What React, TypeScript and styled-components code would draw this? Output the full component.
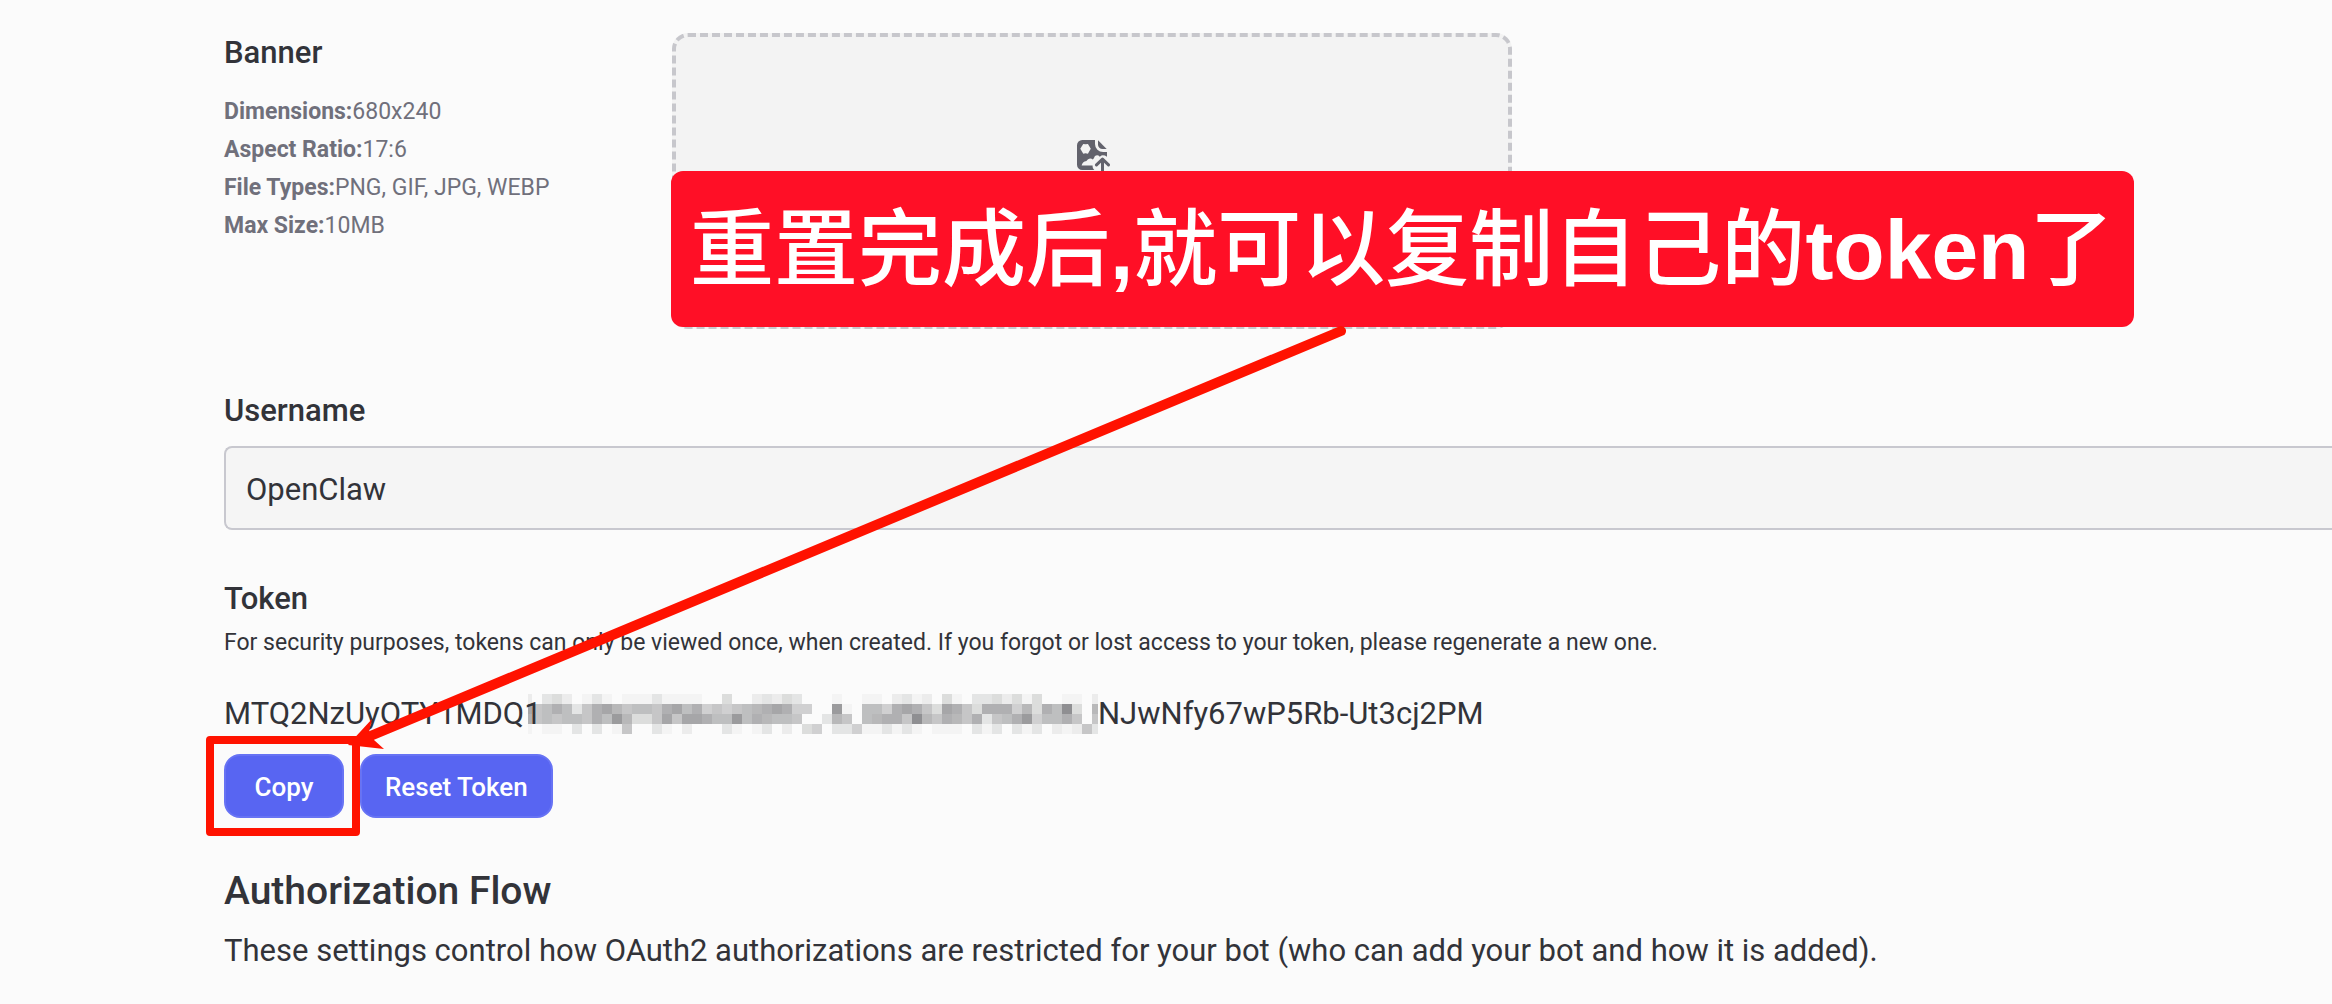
import React from "react";
import styled, { createGlobalStyle } from "styled-components";

const GlobalStyle = createGlobalStyle`
  *, *::before, *::after { box-sizing: border-box; }
  body {
    margin: 0;
    background: #fbfbfb;
    color: #323339;
    font-family: Roboto, "Noto Sans CJK SC", sans-serif;
    overflow-x: hidden;
  }
`;

const Page = styled.main`
  position: relative;
  display: flex;
  flex-direction: column;
  padding: 33px 0 32px 224px;
  overflow: hidden;
`;

const BannerRow = styled.section`
  display: grid;
  grid-template-columns: 448px 840px;
  align-items: start;
`;

const Heading = styled.h2`
  margin: 0;
  font-size: 31px;
  line-height: 40px;
  font-weight: 500;
`;

const SpecList = styled.ul`
  margin: 20px 0 0;
  padding: 0;
  list-style: none;
  color: #70707b;
  font-size: 23px;
  line-height: 38px;

  strong { font-weight: 700; }
`;

const DropArea = styled.div`
  position: relative;
`;

const DropZone = styled.button`
  display: flex;
  align-items: flex-start;
  justify-content: center;
  width: 100%;
  height: 296px;
  padding: 100px 0 0;
  border: 4px dashed #c7c7cc;
  border-radius: 16px;
  background: #f3f3f3;
  color: #62626c;
  cursor: pointer;
`;

const Callout = styled.div`
  position: absolute;
  z-index: 1;
  top: 138px;
  left: -1px;
  height: 156px;
  padding: 0 21px 0 19px;
  border-radius: 12px;
  background: #ff0f26;
  color: #fff;
  font-family: "Liberation Sans", "Noto Sans CJK SC", sans-serif;
  font-size: 84px;
  line-height: 144px;
  font-weight: 700;
  white-space: nowrap;
`;

const Han = styled.span`
  font-family: "Noto Sans CJK SC", sans-serif;
  font-weight: 500;
`;

const Field = styled.section`
  display: flex;
  flex-direction: column;
  margin-top: 62px;
`;

const FieldLabel = styled(Heading).attrs({ as: "label" })<{ htmlFor?: string }>``;

const TextInput = styled.input`
  width: 100%;
  height: 84px;
  margin-top: 15px;
  padding: 2px 20px 0;
  border: 2px solid #c8c8cf;
  border-right: 0;
  border-radius: 8px 0 0 8px;
  background: #f5f5f5;
  color: inherit;
  font: 400 31px/40px Roboto, sans-serif;
  outline: none;
`;

const TokenSection = styled.section`
  display: flex;
  flex-direction: column;
  margin-top: 49px;
`;

const Hint = styled.p`
  margin: 8px 0 0;
  font-size: 23px;
  line-height: 32px;
`;

const TokenValue = styled.div`
  display: flex;
  margin-top: 35px;
  font-size: 31px;
  line-height: 40px;
`;

const TokenStart = styled.span`
  position: relative;
  z-index: 1;
  width: 304px;
`;

const Buttons = styled.div`
  display: flex;
  gap: 16px;
  margin-top: 20px;
`;

const Marked = styled.div`
  position: relative;
  display: flex;

  &::after {
    content: "";
    position: absolute;
    inset: -18px -16px -18px -18px;
    border: 8px solid #ff1200;
    border-radius: 4px;
    pointer-events: none;
  }
`;

const Button = styled.button`
  min-width: 120px;
  height: 64px;
  padding: 2px 23px 0;
  border: 2px solid #6773f4;
  border-radius: 16px;
  background: #5865f2;
  color: #fff;
  font: 500 26px/40px Roboto, sans-serif;
  cursor: pointer;
`;

const FlowSection = styled.section`
  margin-top: 49px;
`;

const Title = styled.h1`
  margin: 0;
  font-size: 39px;
  line-height: 48px;
  font-weight: 500;
`;

const Lead = styled.p`
  margin: 16px 0 0;
  font-size: 31px;
  line-height: 40px;
`;

const Arrow = styled.svg`
  position: absolute;
  z-index: 2;
  top: 320px;
  left: 340px;
  pointer-events: none;
`;

const SHADES: Record<string, string> = {
  "1": "#f4f4f4", "2": "#ececec", "3": "#e4e5e5", "4": "#dcdddc", "5": "#d0d0d1",
  "6": "#c6c6c7", "7": "#bebfc0", "8": "#b8b8b9", "9": "#b0b0b2", A: "#a6a6a8",
  B: "#9b9b9d", C: "#8f8f92",
};

const MOSAIC = [
  "2" + "0342013101113111100400232430" + "0010011023120410334241400110" + "2",
  "A" + "6797369A867769A795656789A955" + "00B107759A964A96499958497C40" + "8",
  "9" + "67677697B8446A6AA977B7987760" + "0386078996C8698693679B577960" + "6",
  "1" + "0110303016003102000310130204" + "5033511313101110313031302126" + "3",
];

function Mosaic() {
  return (
    <svg width="570" height="40" shapeRendering="crispEdges" aria-hidden="true">
      {MOSAIC.flatMap((row, y) =>
        row.split("").map((shade, i) => {
          if (shade === "0") return null;
          const x = i === 0 ? 0 : 4 + (i - 1) * 10;
          const w = i === 0 ? 4 : 10;
          return <rect key={`${x}-${y}`} x={x} y={y * 10} width={w} height="10" fill={SHADES[shade]} />;
        })
      )}
    </svg>
  );
}

function UploadIcon() {
  return (
    <svg width="36" height="36" viewBox="0 0 24 24" fill="currentColor" aria-hidden="true">
      <path
        fillRule="evenodd"
        d="M5.5 2H14v2.6A5.4 5.4 0 0 0 19.400 10H22v3.200A5 5 0 0 0 18.300 12.300L17.200 13.100A2.600 2.600 0 0 0 14 12.600C13.600 13.300 13.300 14.300 12.500 15A2.300 2.300 0 0 0 9 15.200L8.300 16C6.500 16.300 5.300 17.500 5.100 19H12.400C12.300 20.200 12.700 21.300 13.600 22H5.500A3.500 3.500 0 0 1 2 18.500v-13A3.500 3.500 0 0 1 5.500 2ZM6.200 4.600 5.300 6 4.200 7.800 5.300 9.700 6.200 11.100 7.700 10.900 9.300 11.100 10.100 9.700 11.200 7.800 10.100 6 9.300 4.600 7.700 4.900Z"
      />
      <path d="M16 2.200 21.800 8H19a3 3 0 0 1-3-3V2.200Z" />
      <path
        d="M19 23.500v-8M15 18.600l4-3.800 4 3.800"
        fill="none"
        stroke="currentColor"
        strokeWidth="2"
        strokeLinecap="round"
        strokeLinejoin="round"
      />
    </svg>
  );
}

const SPECS: [string, string][] = [
  ["Dimensions:", "680x240"],
  ["Aspect Ratio:", "17:6"],
  ["File Types:", "PNG, GIF, JPG, WEBP"],
  ["Max Size:", "10MB"],
];

export default function App() {
  return (
    <>
      <GlobalStyle />
      <Page>
        <BannerRow>
          <div>
            <Heading>Banner</Heading>
            <SpecList>
              {SPECS.map(([name, value]) => (
                <li key={name}>
                  <strong>{name}</strong>
                  {value}
                </li>
              ))}
            </SpecList>
          </div>
          <DropArea>
            <DropZone type="button" aria-label="Upload banner">
              <UploadIcon />
            </DropZone>
            <Callout>
              <Han>重置完成后</Han>,<Han>就可以复制自己的</Han>token<Han>了</Han>
            </Callout>
          </DropArea>
        </BannerRow>

        <Field>
          <FieldLabel htmlFor="username">Username</FieldLabel>
          <TextInput id="username" type="text" defaultValue="OpenClaw" />
        </Field>

        <TokenSection>
          <Heading>Token</Heading>
          <Hint>
            For security purposes, tokens can only be viewed once, when created. If you forgot or lost access to your
            token, please regenerate a new one.
          </Hint>
          <TokenValue>
            <TokenStart>MTQ2NzUyOTY1MDQ1</TokenStart>
            <Mosaic />
            <span>NJwNfy67wP5Rb-Ut3cj2PM</span>
          </TokenValue>
          <Buttons>
            <Marked>
              <Button type="button">Copy</Button>
            </Marked>
            <Button type="button">Reset Token</Button>
          </Buttons>
        </TokenSection>

        <FlowSection>
          <Title>Authorization Flow</Title>
          <Lead>
            These settings control how OAuth2 authorizations are restricted for your bot (who can add your bot and how
            it is added).
          </Lead>
        </FlowSection>

        <Arrow width="1010" height="436" viewBox="340 320 1010 436" aria-hidden="true">
          <line x1="1341" y1="331" x2="368" y2="737" stroke="#ff1200" strokeWidth="10" strokeLinecap="round" />
          <path d="M348 745 372 719 369 732 374 740 384 749Z" fill="#ff1200" />
        </Arrow>
      </Page>
    </>
  );
}
